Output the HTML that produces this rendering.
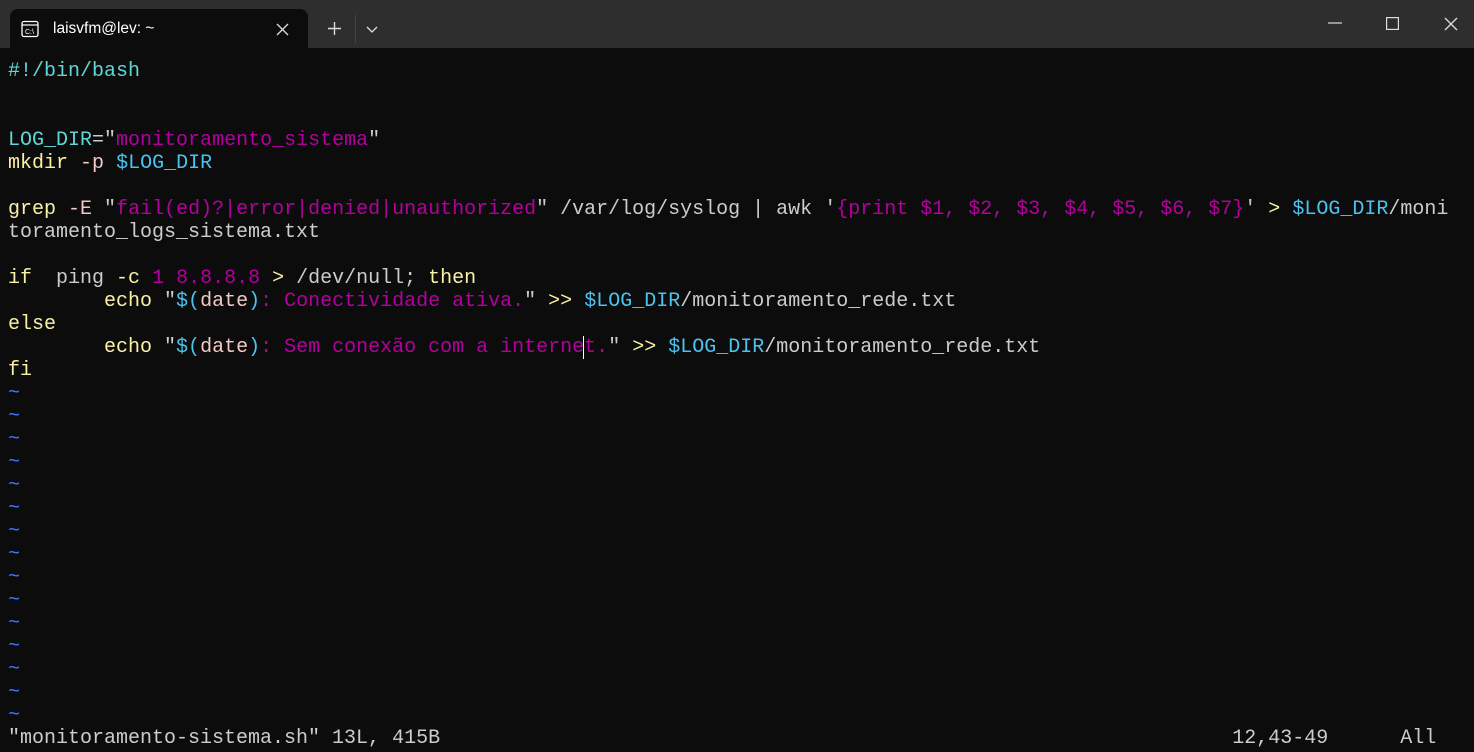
<!DOCTYPE html>
<html><head><meta charset="utf-8"><style>
html,body{margin:0;padding:0;width:1474px;height:752px;background:#0c0c0c;overflow:hidden}
.bar{position:absolute;left:0;top:0;width:1474px;height:48px;background:#2e2e2e}
.tab{position:absolute;left:10px;top:9px;width:298px;height:39px;background:#0c0c0c;border-radius:8px 8px 0 0}
.t{position:absolute;font-family:"Liberation Sans",sans-serif;color:#fff;font-size:15.5px}
pre{position:absolute;left:8px;top:60px;margin:0;font-family:"Liberation Mono",monospace;font-size:20px;line-height:23px;color:#cccccc;white-space:pre}
.c{color:#61d6d6}.m{color:#b4009e}.y{color:#f9f1a5}.b{color:#4cc2f0}.p{color:#f2c9c4}.w{color:#cccccc}.tl{color:#3b78ff}
</style></head><body>
<div class="bar"></div>
<div class="tab"></div>
<svg style="position:absolute;left:21px;top:20px" width="18" height="18" viewBox="0 0 18 18"><rect x="1" y="1.5" width="16" height="15" rx="2" fill="none" stroke="#fff" stroke-width="1.3"/><line x1="1" y1="5" x2="17" y2="5" stroke="#fff" stroke-width="1.2"/><text x="4" y="14" font-size="7" fill="#fff" font-family="Liberation Sans">C:\</text></svg>
<div class="t" style="left:53px;top:20px">laisvfm@lev: ~</div>
<svg style="position:absolute;left:276px;top:23px" width="13" height="13"><path d="M1 1L12 12M12 1L1 12" stroke="#ddd" stroke-width="1.3"/></svg>
<svg style="position:absolute;left:327px;top:21px" width="15" height="15"><path d="M7.5 1V14M1 7.5H14" stroke="#ddd" stroke-width="1.4"/></svg>
<div style="position:absolute;left:355px;top:15px;width:1px;height:28px;background:#444"></div>
<svg style="position:absolute;left:366px;top:26px" width="12" height="8"><path d="M1 1L6 6L11 1" stroke="#ddd" fill="none" stroke-width="1.3"/></svg>
<svg style="position:absolute;left:1328px;top:22px" width="14" height="3"><path d="M0 1H14" stroke="#ddd" stroke-width="1.2"/></svg>
<svg style="position:absolute;left:1386px;top:17px" width="13" height="13"><rect x="0.6" y="0.6" width="11.8" height="11.8" fill="none" stroke="#ddd" stroke-width="1.2"/></svg>
<svg style="position:absolute;left:1444px;top:17px" width="14" height="14"><path d="M1 1L13 13M13 1L1 13" stroke="#ddd" stroke-width="1.3"/></svg>
<pre><span class="c">#!/bin/bash</span>


<span class="c">LOG_DIR</span>=<span class="w">"</span><span class="m">monitoramento_sistema</span>"
<span class="y">mkdir</span> <span class="p">-p</span> <span class="b">$LOG_DIR</span>

<span class="y">grep</span> <span class="p">-E</span> "<span class="m">fail(ed)?|error|denied|unauthorized</span>" /var/log/syslog | awk '<span class="m">{print $1, $2, $3, $4, $5, $6, $7}</span>' <span class="y">&gt;</span> <span class="b">$LOG_DIR</span>/moni
toramento_logs_sistema.txt

<span class="y">if</span>  ping <span class="y">-c</span> <span class="m">1 8.8.8.8</span> <span class="y">&gt;</span> /dev/null; <span class="y">then</span>
        <span class="y">echo</span> "<span class="b">$(</span><span class="p">date</span><span class="b">)</span><span class="m">: Conectividade ativa.</span>" <span class="y">&gt;&gt;</span> <span class="b">$LOG_DIR</span>/monitoramento_rede.txt
<span class="y">else</span>
        <span class="y">echo</span> "<span class="b">$(</span><span class="p">date</span><span class="b">)</span><span class="m">: Sem conexão com a interne<span style="box-shadow:-1px 0 0 #fff">t</span>.</span>" <span class="y">&gt;&gt;</span> <span class="b">$LOG_DIR</span>/monitoramento_rede.txt
<span class="y">fi</span>
<span class="tl">~
~
~
~
~
~
~
~
~
~
~
~
~
~
~</span>
"monitoramento-sistema.sh" 13L, 415B                                                                  12,43-49      All</pre>
</body></html>
